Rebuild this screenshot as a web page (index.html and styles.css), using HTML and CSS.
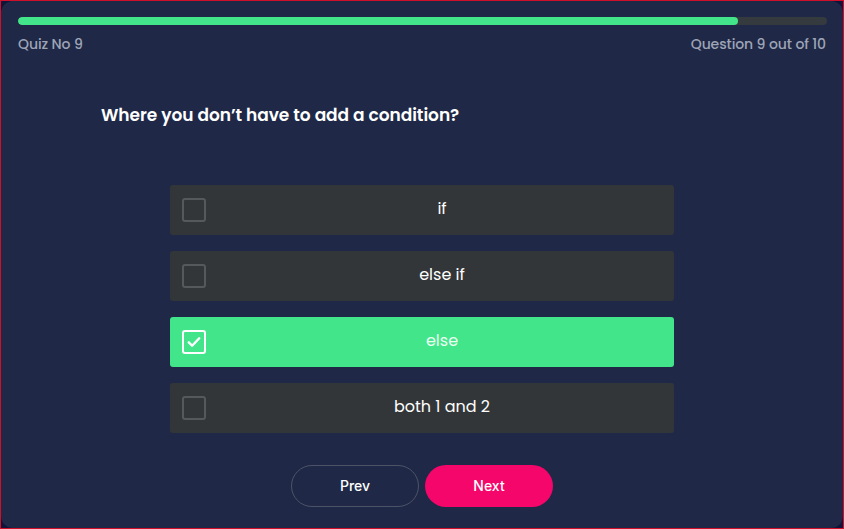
FILE: index.html
```html
<!DOCTYPE html>
<html>
<head>
<meta charset="utf-8">
<link rel="stylesheet" href="styles.css">
</head>
<body>
<div class="frame">
  <div class="card">
    <div class="progress"><div class="progress-fill" style="width: 89%"></div></div>
    <div class="meta">
      <span>Quiz No 9</span>
      <span>Question 9 out of 10</span>
    </div>
    <h1 class="question">Where you don’t have to add a condition?</h1>
    <ul class="options">
      <li class="option"><span class="box"></span><span class="label">if</span></li>
      <li class="option"><span class="box"></span><span class="label">else if</span></li>
      <li class="option selected"><span class="box"><svg viewBox="0 0 24 24" width="18" height="18"><path d="M5 12.5l4.5 4.5L19 7" fill="none" stroke="#fff" stroke-width="3.2" stroke-linecap="round" stroke-linejoin="round"/></svg></span><span class="label">else</span></li>
      <li class="option"><span class="box"></span><span class="label">both 1 and 2</span></li>
    </ul>
    <div class="nav">
      <button class="btn prev">Prev</button>
      <button class="btn next">Next</button>
    </div>
  </div>
</div>
</body>
</html>
```
FILE: styles.css
```css
* { box-sizing: border-box; }
html, body { margin: 0; padding: 0; }
body {
  width: 844px;
  height: 529px;
  background: #0e1232;
  font-family: "Poppins", Inter, "Open Sans", sans-serif;
}
.frame {
  width: 844px;
  height: 529px;
  border: 1px solid #d0102a;
  background: #10143a;
}
.card {
  height: 100%;
  background: #1f2947;
  border-radius: 12px;
  padding: 16px 16px 0 17px;
}
.progress {
  height: 8px;
  background: #353a3f;
  border-radius: 4px;
  overflow: hidden;
}
.progress-fill {
  height: 100%;
  background: #43e58a;
  border-radius: 4px;
}
.meta {
  display: flex;
  justify-content: space-between;
  margin-top: 9px;
  padding-right: 1px;
  font-size: 14px;
  line-height: 20px;
  font-weight: 500;
  color: #9ea4b6;
  letter-spacing: -0.1px;
}
.question {
  margin: 49px 0 0 83px;
  font-size: 17px;
  line-height: 24px;
  font-weight: 600;
  color: #ffffff;
  letter-spacing: -0.05px;
}
.options {
  list-style: none;
  margin: 58px 0 0 152px;
  padding: 0;
  width: 504px;
  display: flex;
  flex-direction: column;
  gap: 16px;
}
.option {
  height: 50px;
  background: #333638;
  border-radius: 3px;
  display: flex;
  align-items: center;
  padding-left: 12px;
}
.option.selected { background: #43e58a; }
.box {
  width: 24px;
  height: 24px;
  border: 2.5px solid #55595c;
  border-radius: 3px;
  display: flex;
  align-items: center;
  justify-content: center;
  flex: none;
}
.selected .box { border-color: #ffffff; }
.label {
  flex: 1;
  text-align: center;
  padding-left: 4px;
  padding-bottom: 4px;
  color: #ffffff;
  font-size: 16px;
}
.selected .label { color: #eafff2; }
.nav {
  display: flex;
  justify-content: center;
  gap: 6px;
  margin: 32px 0 0 152px;
  width: 504px;
}
.btn {
  width: 128px;
  height: 42px;
  border-radius: 21px;
  padding-bottom: 3px;
  font-family: Inter, "Liberation Sans", sans-serif;
  font-size: 14px;
  font-weight: 500;
  color: #ffffff;
  cursor: pointer;
}
.prev {
  background: transparent;
  border: 1px solid #4c5366;
}
.next {
  background: #f5066b;
  border: none;
}
```
